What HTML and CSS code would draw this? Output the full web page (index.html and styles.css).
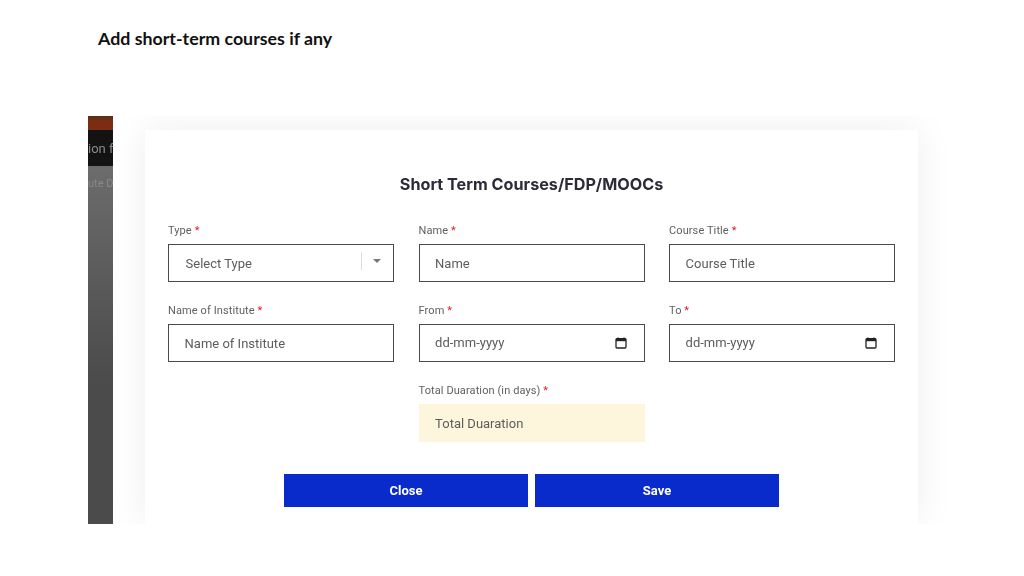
FILE: index.html
```html
<!DOCTYPE html>
<html lang="en">
<head>
<meta charset="utf-8">
<title>Add short-term courses</title>
<link rel="stylesheet" href="styles.css">
</head>
<body>
<main class="slide">
  <h1 class="slide-title">Add short-term courses if any</h1>
  <section class="shot">
    <aside class="strip">
      <div class="strip-top"></div>
      <div class="strip-nav">ion f</div>
      <div class="strip-body">ute D</div>
    </aside>
    <div class="card">
      <h2 class="card-title">Short Term Courses/FDP/MOOCs</h2>
      <div class="form-grid">
        <div class="field">
          <div class="label">Type <span class="req">*</span></div>
          <div class="box select-box">
            <span class="value select-value">Select Type</span>
            <span class="select-sep"></span>
            <span class="select-caret"></span>
          </div>
        </div>
        <div class="field">
          <div class="label">Name <span class="req">*</span></div>
          <div class="box"><span class="value">Name</span></div>
        </div>
        <div class="field">
          <div class="label">Course Title <span class="req">*</span></div>
          <div class="box"><span class="value">Course Title</span></div>
        </div>
        <div class="field">
          <div class="label">Name of Institute <span class="req">*</span></div>
          <div class="box"><span class="value">Name of Institute</span></div>
        </div>
        <div class="field">
          <div class="label">From <span class="req">*</span></div>
          <div class="box date-box">
            <span class="value">dd-mm-yyyy</span>
            <svg class="cal" viewBox="0 0 12 12" aria-hidden="true"><path d="M3 0.5v1.5M9 0.5v1.5"/><rect x="1" y="1.6" width="10" height="9.4" rx="1"/><rect class="cal-head" x="1" y="1.6" width="10" height="2.6"/></svg>
          </div>
        </div>
        <div class="field">
          <div class="label">To <span class="req">*</span></div>
          <div class="box date-box">
            <span class="value">dd-mm-yyyy</span>
            <svg class="cal" viewBox="0 0 12 12" aria-hidden="true"><path d="M3 0.5v1.5M9 0.5v1.5"/><rect x="1" y="1.6" width="10" height="9.4" rx="1"/><rect class="cal-head" x="1" y="1.6" width="10" height="2.6"/></svg>
          </div>
        </div>
        <div class="field field-center">
          <div class="label">Total Duaration (in days) <span class="req">*</span></div>
          <div class="box box-readonly"><span class="value">Total Duaration</span></div>
        </div>
      </div>
      <div class="actions">
        <button class="btn" type="button">Close</button>
        <button class="btn" type="button">Save</button>
      </div>
    </div>
  </section>
</main>
</body>
</html>
```
FILE: styles.css
```css
* { box-sizing: border-box; }
html, body { margin: 0; padding: 0; background: #fff; }
.slide {
  width: 1024px;
  height: 576px;
  overflow: hidden;
  display: flex;
  flex-direction: column;
  padding: 27px 0 0 88px;
}
.slide-title {
  margin: 0 0 67px 10px;
  font: 700 17.8px/22px Lato, sans-serif;
  color: #111;
}
.shot {
  display: flex;
  align-items: stretch;
  height: 408px;
  width: 880px;
  overflow: hidden;
  gap: 32px;
  padding-top: 14px;
  filter: blur(.35px);
}
.strip {
  width: 25px;
  margin-top: -14px;
  display: flex;
  flex-direction: column;
  font: 400 11px/1 Roboto, sans-serif;
  overflow: hidden;
  flex: none;
  position: relative;
  z-index: 1;
}
.strip-top { height: 14px; background: linear-gradient(#4f3416 0, #7c2c12 35%, #7c2c12 100%); }
.strip-nav {
  height: 36px;
  background: #131313;
  color: #8a8a8a;
  line-height: 37px;
  white-space: nowrap;
  font-size: 13px;
}
.strip-body {
  flex: 1;
  background: linear-gradient(#6c6c6c, #4b4b4b 60%);
  color: #8a8a8a;
  padding-top: 12px;
  font-size: 11px;
  white-space: nowrap;
}
.card {
  width: 773px;
  flex: none;
  background: #fff;
  box-shadow: 0 0 36px rgba(0, 0, 0, .07);
  display: flex;
  flex-direction: column;
  padding: 44px 23px 0;
}
.card-title {
  margin: 0 0 30px;
  text-align: center;
  font: 700 16.2px/20px Inter, sans-serif;
  color: #2b2b3a;
}
.form-grid {
  display: grid;
  grid-template-columns: repeat(3, 226px);
  column-gap: 24.5px;
  row-gap: 22px;
  justify-content: start;
}
.field { display: flex; flex-direction: column; gap: 7px; }
.field-center { grid-column: 2; }
.label {
  font: 400 11px/13px Roboto, sans-serif;
  color: #5f5f5f;
  height: 13px;
  letter-spacing: .1px;
}
.req { color: #e02020; }
.box {
  height: 38px;
  border: 1px solid #4a4a4a;
  display: flex;
  align-items: center;
  padding: 2px 16px 0 15.6px;
  background: #fff;
}
.value {
  font: 400 13px/16px Roboto, sans-serif;
  color: #5c5c5c;
}
.select-box { padding-right: 12px; }
.select-value { flex: 1; padding-left: 1px; }
.select-sep { width: 1px; height: 18px; background: #ddd; margin: -7px 11px 0 0; }
.select-caret {
  width: 0;
  height: 0;
  border-left: 4px solid transparent;
  border-right: 4px solid transparent;
  border-top: 4px solid #777;
  margin-top: -6px;
}
.date-box { justify-content: space-between; padding-top: 0; }
.cal { width: 12px; height: 12px; margin-right: 1px; fill: none; stroke: #222; stroke-width: 1.3; }
.cal-head { fill: #222; stroke: none; }
.box-readonly { background: #fdf6dc; border-color: #fdf6dc; }
.actions {
  display: flex;
  justify-content: center;
  gap: 7px;
  margin-top: 32px;
}
.btn {
  width: 244px;
  height: 33px;
  border: 0;
  padding: 0;
  background: #0a2bcb;
  color: #fff;
  font: 700 13px/33px Roboto, sans-serif;
}
```
